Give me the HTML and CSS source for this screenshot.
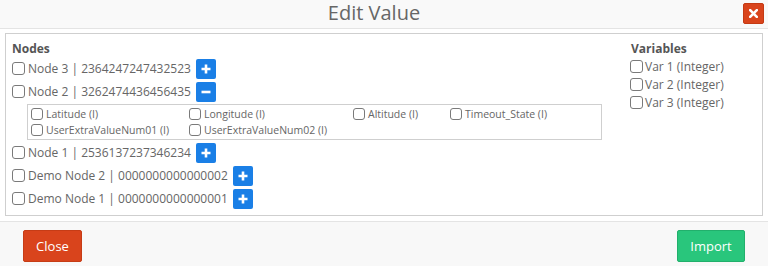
FILE: index.html
```html
<!DOCTYPE html>
<html>
<head>
<meta charset="utf-8">
<link rel="stylesheet" href="styles.css">
</head>
<body>
<div class="modal">
  <div class="modal-header">
    <div class="modal-title">Edit Value</div>
    <button class="btn-x" aria-label="close">
      <svg width="9" height="9" viewBox="0 0 9 9"><path d="M1.2 1.2L7.8 7.8M7.8 1.2L1.2 7.8" stroke="#fff" stroke-width="2.6" stroke-linecap="square"/></svg>
    </button>
  </div>
  <div class="modal-body">
    <div class="panel">
      <div class="col-nodes">
        <div class="label">Nodes</div>
        <div class="node-row"><span class="cb"></span><span class="node-text">Node 3 | 2364247247432523</span><span class="tgl"><svg width="10" height="10" viewBox="0 0 10 10"><path d="M5 0.5V9.5M0.5 5H9.5" stroke="#fff" stroke-width="2.6"/></svg></span></div>
        <div class="node-row"><span class="cb"></span><span class="node-text">Node 2 | 3262474436456435</span><span class="tgl"><svg width="10" height="10" viewBox="0 0 10 10"><path d="M0.5 5H9.5" stroke="#fff" stroke-width="2.6"/></svg></span></div>
        <div class="sub-panel">
          <div class="sub-item"><span class="cb cb-sm"></span>Latitude (I)</div>
          <div class="sub-item"><span class="cb cb-sm"></span>Longitude (I)</div>
          <div class="sub-item"><span class="cb cb-sm"></span>Altitude (I)</div>
          <div class="sub-item"><span class="cb cb-sm"></span>Timeout_State (I)</div>
          <div class="sub-item"><span class="cb cb-sm"></span>UserExtraValueNum01 (I)</div>
          <div class="sub-item"><span class="cb cb-sm"></span>UserExtraValueNum02 (I)</div>
        </div>
        <div class="node-row"><span class="cb"></span><span class="node-text">Node 1 | 2536137237346234</span><span class="tgl"><svg width="10" height="10" viewBox="0 0 10 10"><path d="M5 0.5V9.5M0.5 5H9.5" stroke="#fff" stroke-width="2.6"/></svg></span></div>
        <div class="node-row"><span class="cb"></span><span class="node-text">Demo Node 2 | 0000000000000002</span><span class="tgl"><svg width="10" height="10" viewBox="0 0 10 10"><path d="M5 0.5V9.5M0.5 5H9.5" stroke="#fff" stroke-width="2.6"/></svg></span></div>
        <div class="node-row"><span class="cb"></span><span class="node-text">Demo Node 1 | 0000000000000001</span><span class="tgl"><svg width="10" height="10" viewBox="0 0 10 10"><path d="M5 0.5V9.5M0.5 5H9.5" stroke="#fff" stroke-width="2.6"/></svg></span></div>
      </div>
      <div class="col-vars">
        <div class="label">Variables</div>
        <div class="var-row"><span class="cb"></span>Var 1 (Integer)</div>
        <div class="var-row"><span class="cb"></span>Var 2 (Integer)</div>
        <div class="var-row"><span class="cb"></span>Var 3 (Integer)</div>
      </div>
    </div>
  </div>
  <div class="modal-footer">
    <button class="btn btn-close">Close</button>
    <button class="btn btn-import">Import</button>
  </div>
</div>
</body>
</html>
```
FILE: styles.css
```css
* { box-sizing: border-box; }
html, body { margin: 0; padding: 0; background: #fff; }
body { font-family: "Open Sans", "DejaVu Sans", sans-serif; color: #666; }

.modal { width: 768px; height: 266px; display: flex; flex-direction: column; background: #fff; }

.modal-header {
  height: 29px;
  background: #f9f9f9;
  border-bottom: 1px solid #e4e4e4;
  display: flex;
  align-items: flex-start;
  padding: 3px 4px 0 5px;
}
.modal-title {
  flex: 1;
  text-align: center;
  font-size: 20px;
  line-height: 20px;
  color: #666;
  font-weight: 400;
}
.btn-x {
  width: 21px; height: 21px;
  background: #d9441c;
  border: 1px solid #c43a14;
  border-radius: 2px;
  padding: 0;
  display: flex; align-items: center; justify-content: center;
}

.modal-body { padding: 4px 5px 5px 5px; }
.panel {
  height: 183px;
  border: 1px solid #cfcfcf;
  padding: 6px 6px 0 6px;
  display: flex;
}
.col-nodes { flex: 1; }
.col-vars { width: 125px; }

.label { font-size: 12px; font-weight: 700; color: #555; line-height: 17px; }

.cb {
  display: inline-block;
  width: 13px; height: 13px;
  border: 1px solid #7a7a7a;
  border-radius: 3px;
  background: #fff;
  flex: none;
}
.cb-sm { width: 12px; height: 12px; }

.node-row {
  height: 23px;
  display: flex;
  align-items: center;
  font-size: 12px;
}
.node-row .cb { margin-right: 3px; }
.tgl {
  width: 20px; height: 20px;
  background: #1a7fe6;
  border-radius: 2px;
  margin-left: 5px;
  display: flex; align-items: center; justify-content: center;
}

.sub-panel {
  margin: 1px 0 1px 15px;
  width: 575px;
  border: 1px solid #cfcfcf;
  padding: 1px 4px 1px 3px;
  display: grid;
  grid-template-columns: 158px 164px 97px auto;
  grid-auto-rows: 16px;
}
.sub-item {
  display: flex; align-items: center;
  font-size: 10.5px;
  color: #666;
}
.sub-item .cb { margin-right: 3px; }

.var-row {
  height: 18px;
  display: flex; align-items: center;
  font-size: 12px;
}
.var-row .cb { margin-right: 2px; margin-left: -1px; }

.modal-footer {
  flex: 1;
  background: #f8f8f8;
  border-top: 1px solid #e4e4e4;
  display: flex;
  justify-content: space-between;
  align-items: flex-start;
  padding: 8px 23px 0 23px;
}
.btn {
  font-family: "Open Sans", sans-serif;
  font-size: 13px;
  color: #fff;
  height: 32px;
  border-radius: 2px;
  padding: 0 12px;
}
.btn-close { width: 59px; background: #d9441c; border: 1px solid #c63c16; }
.btn-import { width: 68px; background: #29c67c; border: 1px solid #22b06c; }
```
